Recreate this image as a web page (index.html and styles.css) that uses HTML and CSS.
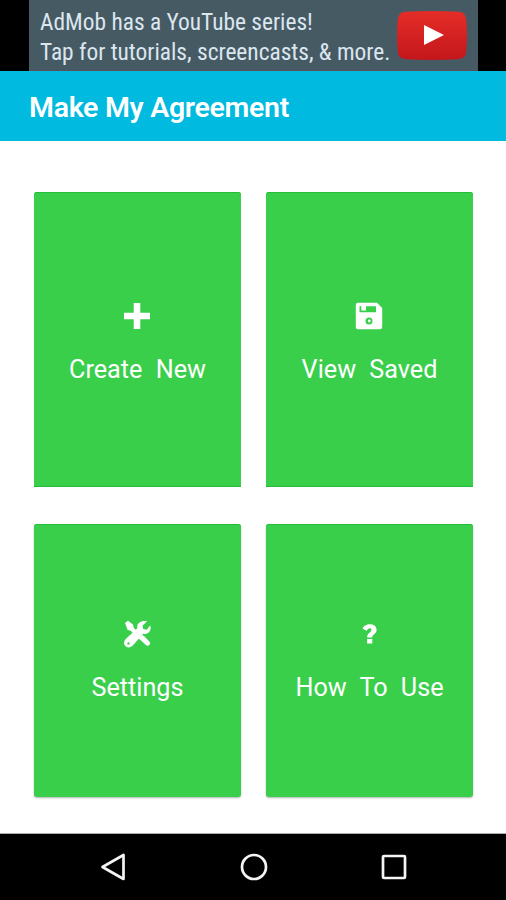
FILE: index.html
```html
<!DOCTYPE html>
<html lang="en">
<head>
<meta charset="utf-8">
<title>Make My Agreement</title>
<link rel="stylesheet" href="styles.css">
</head>
<body>
<div class="ad-bar">
  <div class="ad">
    <p class="ad-text"><span>AdMob has a YouTube series!</span><span>Tap for tutorials, screencasts, &amp; more.</span></p>
    <svg class="play" viewBox="0 0 70 49"><defs><linearGradient id="red" x2="0" y2="1"><stop stop-color="#e52d27"/><stop offset="1" stop-color="#c3161c"/></linearGradient></defs><path fill="url(#red)" d="M9 .8Q35-.8 61 .8Q69 1 69.3 9Q70.6 24 69.3 40Q69 48 61 48.2Q35 49.6 9 48.2Q1 48 .7 40Q-.6 24 .7 9Q1 1 9 .8Z"/><path fill="#fff" d="M27 14v20l20-10z"/></svg>
  </div>
</div>
<header class="title-bar"><h1>Make My Agreement</h1></header>
<main class="grid">
  <button class="card"><svg class="icon" viewBox="0 0 28 28"><path d="M10.700 1h6.600v9.700h9.700v6.600h-9.700v9.700h-6.600v-9.700H1v-6.600h9.700z"/></svg><span class="label">Create New</span></button>
  <button class="card"><svg class="icon" viewBox="0 0 28 28"><path fill-rule="evenodd" d="M3 .8h19L27.200 6v19q0 2.200-2.200 2.200H3Q.8 27.200 .8 25V3Q.8 .8 3 .8zM4.500 4.200v6h16.500v-6zM14 15.500a3.500 3.500 0 1 0 0 7a3.500 3.500 0 1 0 0-7z"/><path d="M6.300 4h4.700v4.500h-4.700z"/><circle cx="14.300" cy="19" r="1.400"/></svg><span class="label">View Saved</span></button>
  <button class="card"><svg class="icon" viewBox="0 0 28 28"><path d="M2 3l3-2.300l5 3.700l.7 3.300l4 4l-3 3l-4-4l-3-.8zM15.500 18.500l3.500-3.500l2 1.100l5.400 5.400q1.500 1.900 0 3.500q-1.900 1.600-3.500 0l-6-5.500z"/><path fill-rule="evenodd" d="M24 1.300l-4.500 4.400l.7 3.300l3.500.7l3.500-4.300c1.800 5-2 9.300-7 8.400L9.800 25.500C6.800 28.500 2.900 27.500 1.700 25.300q-1.900-3.600 1.300-6.600L14.300 8.300C13.500 3.200 18 .1 24 1.300zM5.500 22.200a1.200 1.200 0 1 0 0 2.400a1.200 1.200 0 1 0 0-2.400z"/></svg><span class="label">Settings</span></button>
  <button class="card"><svg class="icon" viewBox="0 0 28 28"><path d="M7.700 8.700C9 2.800 21.400 2.500 21.600 9.800C21.600 14 17.300 14.100 17.300 17.500H12.100C11.900 12.800 16.400 12.500 16.400 9.900C16.400 7.400 13 7.600 11.700 10.800zM12.100 18.900h5.200v4.600h-5.200z"/></svg><span class="label">How To Use</span></button>
</main>
<nav class="nav-bar">
  <svg viewBox="0 0 30 30"><path d="M3.500 15L24.500 3v24z"/></svg>
  <svg viewBox="0 0 30 30"><circle cx="15" cy="15" r="12"/></svg>
  <svg viewBox="0 0 30 30"><rect x="4" y="4" width="22" height="22" rx="1"/></svg>
</nav>
</body>
</html>
```

FILE: styles.css
```css
* { box-sizing: border-box; }
body {
  margin: 0;
  width: 506px;
  height: 900px;
  display: flex;
  flex-direction: column;
  overflow: hidden;
  background: #fff;
  color: #fff;
  font-family: Roboto, sans-serif;
}
.ad-bar { height: 71px; padding: 0 28px 0 29px; background: #000; }
.ad {
  height: 71px;
  display: flex;
  justify-content: space-between;
  padding: 7px 11px 0 11px;
  background: #465a64;
  border-bottom: 1px solid #59505d;
}
.ad-text {
  margin: 0;
  width: 350px;
  font-family: "Roboto Condensed", Roboto, sans-serif;
  font-stretch: 75%;
  font-size: 23.4px;
  line-height: 30px;
  color: #dce6ef;
  white-space: nowrap;
}
.ad-text span { display: block; }
.play { flex: none; width: 70px; height: 49px; margin-top: 4px; }
.title-bar {
  height: 70px;
  display: flex;
  align-items: center;
  padding: 4px 29px 0;
  background: #00badf;
}
h1 { margin: 0; font-size: 28.5px; font-weight: 600; letter-spacing: -.3px; line-height: 34px; white-space: nowrap; }
.grid {
  height: 693px;
  display: grid;
  grid-template-columns: 207px 207px;
  grid-template-rows: 295px 273px;
  gap: 37px 25px;
  padding: 51px 33px 0 34px;
  border-bottom: 1px solid #aaa;
}
.card {
  border: 0;
  border-radius: 3px;
  margin: 0;
  padding: 2px 0 0;
  display: flex;
  flex-direction: column;
  align-items: center;
  justify-content: center;
  gap: 24px;
  background: #39cf4b;
  box-shadow: inset 0 1px #25bd3c, 0 1px 2px rgba(0, 0, 0, .3);
  color: #fff;
  font-family: inherit;
}
.card:nth-child(-n+2) { border-radius: 3px 3px 0 0; padding-top: 8px; box-shadow: inset 0 1px #25bd3c, inset 0 -1px #25bd3c; }
.icon { width: 28px; height: 28px; margin-right: 1px; fill: #fff; }
.label { font-size: 25.2px; line-height: 32px; word-spacing: 7px; white-space: nowrap; }
.nav-bar {
  height: 66px;
  display: flex;
  align-items: center;
  justify-content: space-between;
  padding: 0 97px 0 99px;
  background: #000;
}
.nav-bar svg { width: 30px; height: 30px; fill: none; stroke: #f4f4f4; stroke-width: 2.7; stroke-linejoin: round; }
```
